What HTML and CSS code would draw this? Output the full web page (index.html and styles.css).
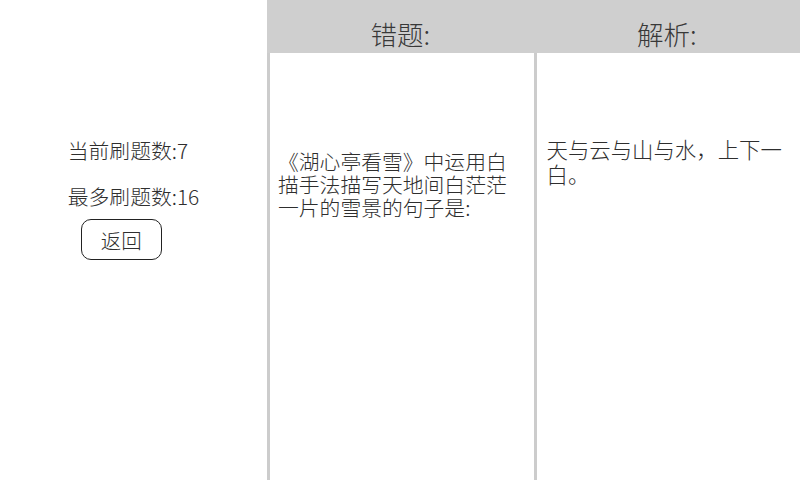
FILE: index.html
```html
<!DOCTYPE html>
<html lang="zh">
<head>
<meta charset="utf-8">
<link rel="stylesheet" href="styles.css">
</head>
<body>
<div class="page">
  <div class="side">
    <div class="stats">
      <div class="stat">当前刷题数:7</div>
      <div class="stat">最多刷题数:16</div>
      <div class="back">返回</div>
    </div>
  </div>
  <div class="board">
    <div class="head">错题:</div>
    <div class="head">解析:</div>
    <div class="cell cell-q">《湖心亭看雪》中运用白描手法描写天地间白茫茫一片的雪景的句子是:</div>
    <div class="cell cell-a">天与云与山与水，上下一白。</div>
  </div>
</div>
</body>
</html>
```
FILE: styles.css
```css
html, body {
  margin: 0;
  padding: 0;
  background: #ffffff;
}
body {
  font-family: "Noto Sans CJK SC", "Noto Sans", sans-serif;
  font-weight: 300;
  color: #2e2e2e;
}
.page {
  display: flex;
  width: 800px;
  height: 480px;
  overflow: hidden;
}
.side {
  width: 267px;
  flex: none;
  display: flex;
  justify-content: center;
  padding-top: 136px;
  box-sizing: border-box;
}
.stats {
  display: flex;
  flex-direction: column;
  align-items: flex-start;
}
.stat {
  font-size: 20.8px;
  line-height: 28px;
  margin-bottom: 18px;
  white-space: nowrap;
}
.stat + .stat {
  margin-bottom: 9px;
}
.back {
  margin-left: 13px;
  width: 81px;
  height: 41px;
  box-sizing: border-box;
  border: 1.5px solid #222222;
  border-radius: 10px;
  font-size: 20.5px;
  display: flex;
  align-items: center;
  justify-content: center;
}
.board {
  flex: 1;
  display: grid;
  grid-template-columns: 1fr 1fr;
  grid-template-rows: 53px 1fr;
}
.head {
  background: #cfcfcf;
  font-size: 26.5px;
  line-height: 30px;
  padding-top: 19px;
  box-sizing: border-box;
  text-align: center;
  color: #383838;
}
.cell {
  border-left: 3px solid #cccccc;
}
.cell-q {
  font-size: 20.8px;
  line-height: 23px;
  padding: 97px 10px 0 8px;
}
.cell-a {
  font-size: 21.4px;
  line-height: 25px;
  padding: 83px 8px 0 10px;
}
```
